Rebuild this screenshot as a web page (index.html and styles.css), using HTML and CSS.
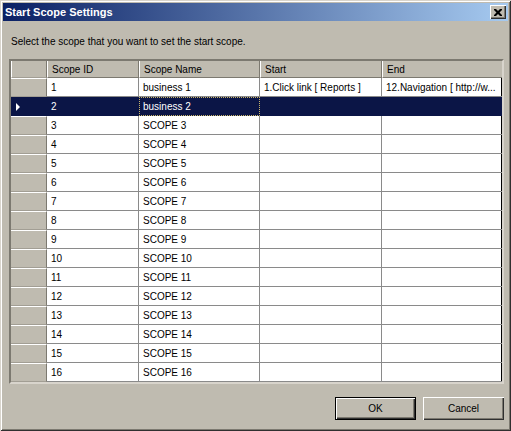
FILE: index.html
```html
<!DOCTYPE html>
<html lang="en">

<head>
    <meta charset="UTF-8">
    <title>Start Scope Settings</title>
    <link rel="stylesheet" href="styles.css">
</head>

<body>

    <div class="window">
        <div class="titlebar">
            <span class="title">Start Scope Settings</span>
            <span class="close-btn">
                <svg width="8" height="7" viewBox="0 0 8 7">
                    <path d="M0 0h2l2 2 2-2h2v1l-2.5 2.5 2.5 2.5v1h-2l-2-2-2 2h-2v-1l2.5-2.5-2.5-2.5z" fill="#000" />
                </svg>
            </span>
        </div>

        <div class="content">
            <div class="label">Select the scope that you want to set the start scope.</div>

            <div class="grid">
                <div class="head rowhead"></div>
                <div class="head">Scope ID</div>
                <div class="head">Scope Name</div>
                <div class="head">Start</div>
                <div class="head last">End</div>

                <div class="rowhead"></div>
                <div class="cell">1</div>
                <div class="cell">business 1</div>
                <div class="cell">1.Click link [ Reports ]</div>
                <div class="cell last">12.Navigation [ http://w...</div>

                <div class="rowhead sel"><span class="arrow"></span></div>
                <div class="cell sel">2</div>
                <div class="cell sel focus">business 2</div>
                <div class="cell sel"></div>
                <div class="cell sel last"></div>

                <div class="rowhead"></div><div class="cell">3</div><div class="cell">SCOPE 3</div><div class="cell"></div><div class="cell last"></div>
                <div class="rowhead"></div><div class="cell">4</div><div class="cell">SCOPE 4</div><div class="cell"></div><div class="cell last"></div>
                <div class="rowhead"></div><div class="cell">5</div><div class="cell">SCOPE 5</div><div class="cell"></div><div class="cell last"></div>
                <div class="rowhead"></div><div class="cell">6</div><div class="cell">SCOPE 6</div><div class="cell"></div><div class="cell last"></div>
                <div class="rowhead"></div><div class="cell">7</div><div class="cell">SCOPE 7</div><div class="cell"></div><div class="cell last"></div>
                <div class="rowhead"></div><div class="cell">8</div><div class="cell">SCOPE 8</div><div class="cell"></div><div class="cell last"></div>
                <div class="rowhead"></div><div class="cell">9</div><div class="cell">SCOPE 9</div><div class="cell"></div><div class="cell last"></div>
                <div class="rowhead"></div><div class="cell">10</div><div class="cell">SCOPE 10</div><div class="cell"></div><div class="cell last"></div>
                <div class="rowhead"></div><div class="cell">11</div><div class="cell">SCOPE 11</div><div class="cell"></div><div class="cell last"></div>
                <div class="rowhead"></div><div class="cell">12</div><div class="cell">SCOPE 12</div><div class="cell"></div><div class="cell last"></div>
                <div class="rowhead"></div><div class="cell">13</div><div class="cell">SCOPE 13</div><div class="cell"></div><div class="cell last"></div>
                <div class="rowhead"></div><div class="cell">14</div><div class="cell">SCOPE 14</div><div class="cell"></div><div class="cell last"></div>
                <div class="rowhead"></div><div class="cell">15</div><div class="cell">SCOPE 15</div><div class="cell"></div><div class="cell last"></div>
                <div class="rowhead"></div><div class="cell">16</div><div class="cell">SCOPE 16</div><div class="cell"></div><div class="cell last"></div>
            </div>

            <div class="buttons">
                <button class="btn default">OK</button>
                <button class="btn">Cancel</button>
            </div>
        </div>
    </div>

</body>

</html>
```

FILE: styles.css
```css
body {
    margin: 0;
    padding: 0;
    font-family: 'Liberation Sans', Arial, sans-serif;
    font-size: 10px;
    color: #000;
}

/* dialog frame */
.window {
    width: 511px;
    height: 431px;
    box-sizing: border-box;
    padding: 3px;
    background: #bfbbb0;
    box-shadow: inset 1px 1px #d8d4cc, inset -1px -1px #303030,
        inset 2px 2px #fff, inset -2px -2px #7c7970;
}

.titlebar {
    height: 18px;
    display: flex;
    align-items: center;
    justify-content: space-between;
    padding: 0 2px 0 2px;
    background: linear-gradient(to right, #0a2064, #a6caf0);
}

.title {
    color: #fff;
    font-weight: bold;
    font-size: 11px;
}

.close-btn {
    width: 16px;
    height: 14px;
    box-sizing: border-box;
    display: flex;
    align-items: center;
    justify-content: center;
    background: #bfbbb0;
    box-shadow: inset 1px 1px #fff, inset -1px -1px #303030, inset -2px -2px #7c7970;
}

.content {
    padding: 0 4px 0 6px;
}

.label {
    margin-top: 14px;
    padding-left: 2px;
    height: 13px;
    line-height: 13px;
}

/* data grid */
.grid {
    margin-top: 11px;
    display: grid;
    grid-template-columns: 36px 92px 121px 122px 120px;
    grid-template-rows: 17px repeat(16, 19px);
    border: 2px solid;
    border-color: #7c7970 #d8d4cc #d8d4cc #7c7970;
    box-shadow: inset 1px 1px #000, inset -1px -1px #000;
    background: #fff;
}

.grid > div {
    box-sizing: border-box;
    white-space: nowrap;
    overflow: hidden;
    display: flex;
    align-items: center;
}

.head {
    background: #bfbbb0;
    border-left: 1px solid #fff;
    border-right: 1px solid #7c7970;
    border-bottom: 1px solid #7c7970;
    padding-left: 4px;
}

.cell {
    border-right: 1px solid #8a8a8a;
    border-bottom: 1px solid #8a8a8a;
    padding-left: 4px;
}

.last {
    border-right: none;
}

.rowhead {
    background: #bfbbb0;
    border-top: 1px solid #fff;
    border-right: 1px solid #7c7970;
    border-bottom: 1px solid #a29e94;
}

.head.rowhead {
    border-left: 1px solid #fff;
    border-top: none;
}

.sel {
    background: #0b1546;
    color: #fff;
    border-color: #0b1546;
}

.rowhead.sel {
    border-top-color: #0b1546;
}

.focus {
    outline: 1px dotted #c9b66a;
    outline-offset: -1px;
}

.arrow {
    margin-left: 5px;
    width: 0;
    height: 0;
    border-left: 4px solid #fff;
    border-top: 4px solid transparent;
    border-bottom: 4px solid transparent;
}

/* bottom buttons */
.buttons {
    margin-top: 13px;
    display: flex;
    justify-content: flex-end;
    gap: 7px;
}

.btn {
    width: 81px;
    height: 23px;
    margin: 0;
    padding: 0;
    border: none;
    font-family: 'Liberation Sans', Arial, sans-serif;
    font-size: 10px;
    color: #000;
    background: #bfbbb0;
    box-shadow: inset 1px 1px #fff, inset -1px -1px #303030, inset -2px -2px #7c7970;
}

.btn.default {
    box-shadow: inset 0 0 0 1px #000, inset 2px 2px #fff, inset -2px -2px #303030, inset -3px -3px #7c7970;
}
```
